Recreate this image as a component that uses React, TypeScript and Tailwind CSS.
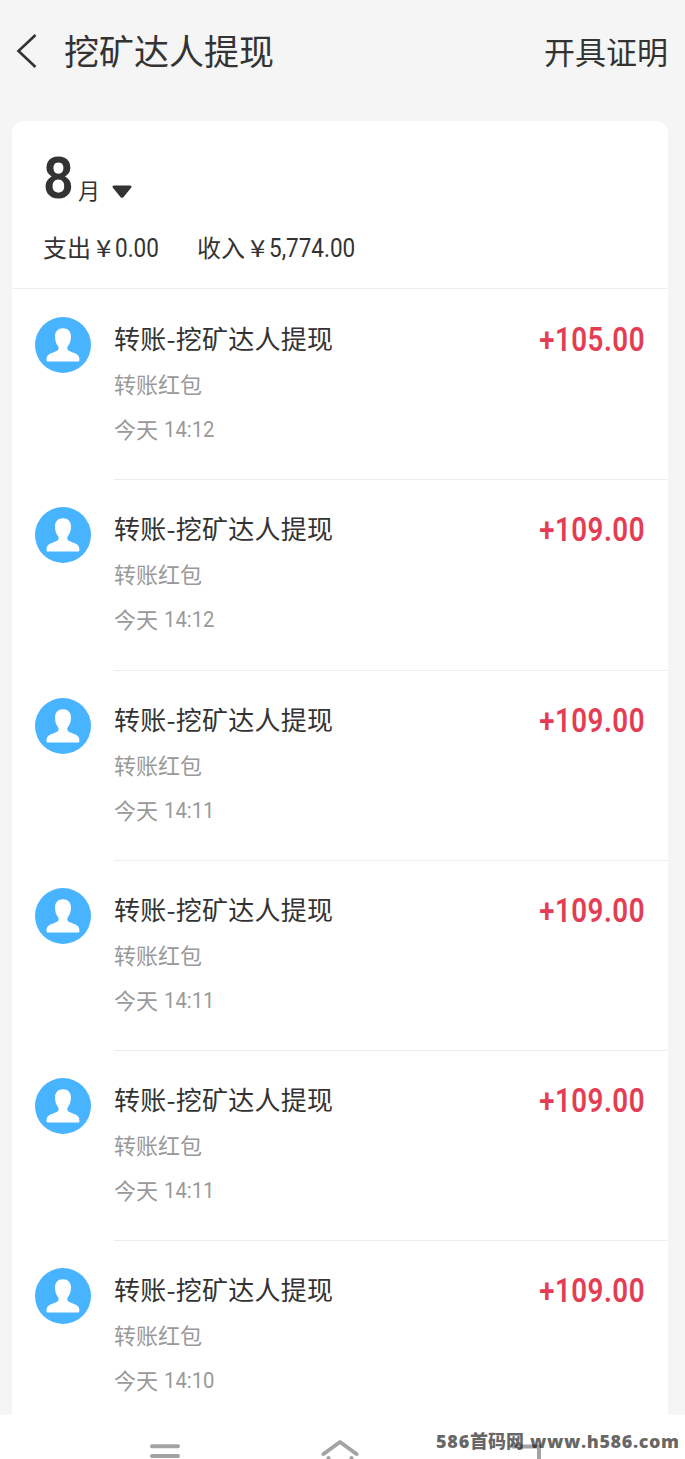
import type { ReactNode } from 'react';
import { clsx } from 'clsx';

type Transfer = {
  amount: string;
  time: string;
};

const transfers: Transfer[] = [
  { amount: '+105.00', time: '14:12' },
  { amount: '+109.00', time: '14:12' },
  { amount: '+109.00', time: '14:11' },
  { amount: '+109.00', time: '14:11' },
  { amount: '+109.00', time: '14:11' },
  { amount: '+109.00', time: '14:10' },
];

// Condensed digits: Roboto squeezed horizontally
function Digits({ className, children }: { className?: string; children: ReactNode }) {
  return (
    <span
      className={clsx(
        "inline-block whitespace-nowrap font-['Roboto',sans-serif]",
        className
      )}
    >
      {children}
    </span>
  );
}

function Avatar() {
  return (
    <svg viewBox="0 0 56 56" className="mt-[28px] size-[56px] shrink-0">
      <circle cx="28" cy="28" r="28" fill="#48b4ff" />
      <path
        fill="#fff"
        d="M28 11.300c5 0 8 3.200 8 8.200 0 4-1.200 7.300-3.200 9.700-1 1.500-.6 3.700 1 4.500 3 1.500 6.300 2.300 8.600 4 1.500 1.100 2 2.500 2 5.300 0 1-.5 1.500-1.500 1.500H13c-1 0-1.500-.5-1.500-1.500 0-2.800.5-4.200 2-5.300 2.300-1.700 5.600-2.500 8.600-4 1.600-.8 2-3 1-4.500-2-2.400-3.100-5.700-3.100-9.700 0-5 3-8.200 8-8.200z"
      />
    </svg>
  );
}

function TransferRow({ amount, time, first }: Transfer & { first: boolean }) {
  return (
    <li className="flex h-[190.3px] pl-[23px]">
      <Avatar />
      <div
        className={clsx(
          'ml-[23px] flex flex-1 justify-between border-t pr-[23px]',
          first ? 'border-transparent' : 'border-[#ededed]'
        )}
      >
        <div className="pt-[29px]">
          <p className="text-[26px] leading-[38px] tracking-[0.25px] text-[#333]">转账-挖矿达人提现</p>
          <p className="mt-[10px] text-[22px] leading-[32px] text-[#999]">转账红包</p>
          <p className="mt-[13px] flex text-[22px] leading-[32px] text-[#999]">
            今天
            <Digits className="mt-[2px] ml-[6px] origin-left scale-x-[0.92]">{time}</Digits>
          </p>
        </div>
        <Digits className="mt-[30px] origin-right scale-x-[0.84] text-[33px] leading-[40px] font-semibold tracking-[0.6px] text-[#e43d53]">
          {amount}
        </Digits>
      </div>
    </li>
  );
}

function Summary() {
  return (
    <section className="h-[168px] border-b border-[#ededed] pt-[24px] pl-[31px] text-[#333]">
      <div className="flex h-[64px] items-end">
        <Digits className="mb-[-1px] w-[35px] origin-left scale-x-[0.93] text-[58px] leading-[64px] font-semibold">8</Digits>
        <span className="mb-[4px] text-[22px] leading-[32px]">月</span>
        <svg viewBox="0 0 20 14" className="mb-[10px] ml-[12px] h-[14px] w-[20px]">
          <path fill="#333" d="M2 .5h16c1.500 0 2 1.300 1.100 2.300l-7.500 9.300c-.9 1.100-2.300 1.100-3.200 0L.9 2.800C0 1.800.5.5 2 .5z" />
        </svg>
      </div>
      <div className="mt-[20px] flex text-[24px] leading-[36px]">
        <p className="flex w-[154px]">
          支出<span className="ml-[5px] inline-block origin-left scale-x-[1.15]">¥</span>
          <Digits className="mt-[2px] ml-[6px] origin-left scale-x-[0.9] text-[25px]">0.00</Digits>
        </p>
        <p className="flex">
          收入<span className="ml-[5px] inline-block origin-left scale-x-[1.15]">¥</span>
          <Digits className="mt-[2px] ml-[6px] origin-left scale-x-[0.9] text-[25px]">5,774.00</Digits>
        </p>
      </div>
    </section>
  );
}

function NavBar() {
  return (
    <footer className="relative h-[44px] overflow-hidden bg-white">
      <svg viewBox="0 0 685 44" className="h-[44px] w-[685px]" fill="none" stroke="#a3a3a3" strokeWidth="4" strokeLinecap="round">
        <path d="M152 31.300h26M152 41h26" />
        <path d="M323.500 39 340 27l16.500 12M328.500 43v4M351.500 43v4" strokeLinejoin="round" />
        <path d="M512 31.500h27V48" strokeLinecap="butt" />
      </svg>
      <p className="absolute top-[14px] left-[436px] font-['Open_Sans','Noto_Sans_CJK_SC',sans-serif] text-[18px] leading-[24px] font-extrabold whitespace-nowrap text-black/60">
        <span className="tracking-[0.8px]">586</span>首码网
        <span className="ml-[6px] tracking-[0.6px]">www.h586.com</span>
      </p>
    </footer>
  );
}

export default function App() {
  return (
    <div className="flex h-[1459px] w-[685px] flex-col overflow-hidden bg-[#f5f5f5] font-['Noto_Sans_CJK_SC',sans-serif]">
      <header className="flex h-[121px] shrink-0 pr-[17px] pl-[16px] text-[#333]">
        <svg viewBox="0 0 22 34" className="mt-[34px] h-[34px] w-[22px]" fill="none" stroke="#333" strokeWidth="2.600">
          <path d="M19.500 1 2.500 17l17 16" />
        </svg>
        <h1 className="mt-[25px] ml-[26px] flex-1 text-[35px] leading-[50px]">挖矿达人提现</h1>
        <span className="mt-[29px] text-[31px] leading-[44px]">开具证明</span>
      </header>
      <main className="mr-[17px] ml-[12px] h-[1294px] shrink-0 overflow-hidden rounded-t-[12px] bg-white">
        <Summary />
        <ul>
          {transfers.map((t, i) => (
            <TransferRow key={i} {...t} first={i === 0} />
          ))}
        </ul>
      </main>
      <NavBar />
    </div>
  );
}
